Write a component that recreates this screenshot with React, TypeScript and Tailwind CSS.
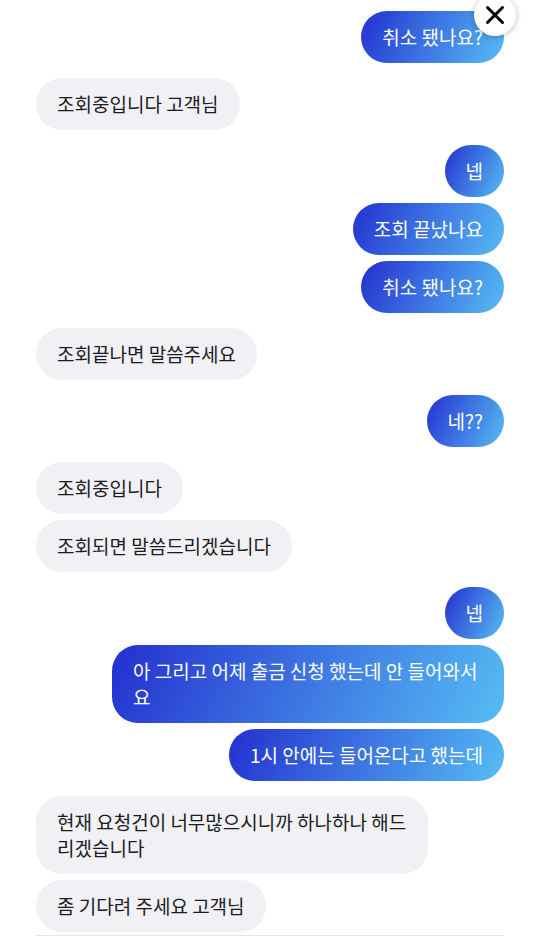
import { X } from 'lucide-react'

type Msg = { me: boolean; text: string; gap?: 'sm' | 'lg' }

const messages: Msg[] = [
  { me: true, text: '취소 됐나요?' },
  { me: false, text: '조회중입니다 고객님', gap: 'lg' },
  { me: true, text: '넵', gap: 'lg' },
  { me: true, text: '조회 끝났나요', gap: 'sm' },
  { me: true, text: '취소 됐나요?', gap: 'sm' },
  { me: false, text: '조회끝나면 말씀주세요', gap: 'lg' },
  { me: true, text: '네??', gap: 'lg' },
  { me: false, text: '조회중입니다', gap: 'lg' },
  { me: false, text: '조회되면 말씀드리겠습니다', gap: 'sm' },
  { me: true, text: '넵', gap: 'lg' },
  { me: true, text: '아 그리고 어제 출금 신청 했는데 안 들어와서요', gap: 'sm' },
  { me: true, text: '1시 안에는 들어온다고 했는데', gap: 'sm' },
  { me: false, text: '현재 요청건이 너무많으시니까 하나하나 해드리겠습니다', gap: 'lg' },
  { me: false, text: '좀 기다려 주세요 고객님', gap: 'sm' },
]

function Bubble({ me, text }: { me: boolean; text: string }) {
  return (
    <div className={me ? 'flex justify-end' : 'flex justify-start'}>
      <div
        className={
          me
            ? 'max-w-[392px] rounded-[26px] bg-linear-[115deg] from-[#2430d0] to-[#56bdf4] px-[21px] py-[13px] text-[19px] leading-[26px] text-white'
            : 'max-w-[392px] rounded-[26px] bg-[#f0f0f5] px-[21px] py-[13px] text-[19px] leading-[26px] text-[#1c1c1e]'
        }
      >
        {text}
      </div>
    </div>
  )
}

export default function App() {
  return (
    <div
      className="relative h-[936px] w-[540px] overflow-hidden bg-white"
      style={{ fontFamily: '"Noto Sans CJK KR", "Noto Sans", sans-serif' }}
    >
      <div className="flex flex-col px-[36px] pt-[11px]">
        {messages.map((m, i) => (
          <div key={i} className={m.gap === 'lg' ? 'mt-[15px]' : m.gap === 'sm' ? 'mt-[6px]' : ''}>
            <Bubble me={m.me} text={m.text} />
          </div>
        ))}
        <div className="mt-[3px] h-px bg-[#e4e4ea]" />
      </div>

      {/* close button */}
      <button className="absolute right-[24px] top-[-6px] flex h-[42px] w-[42px] items-center justify-center rounded-full bg-white shadow-[0_1px_6px_rgba(0,0,0,0.25)]">
        <X className="h-[30px] w-[30px] text-black" strokeWidth={2.4} />
      </button>
    </div>
  )
}
